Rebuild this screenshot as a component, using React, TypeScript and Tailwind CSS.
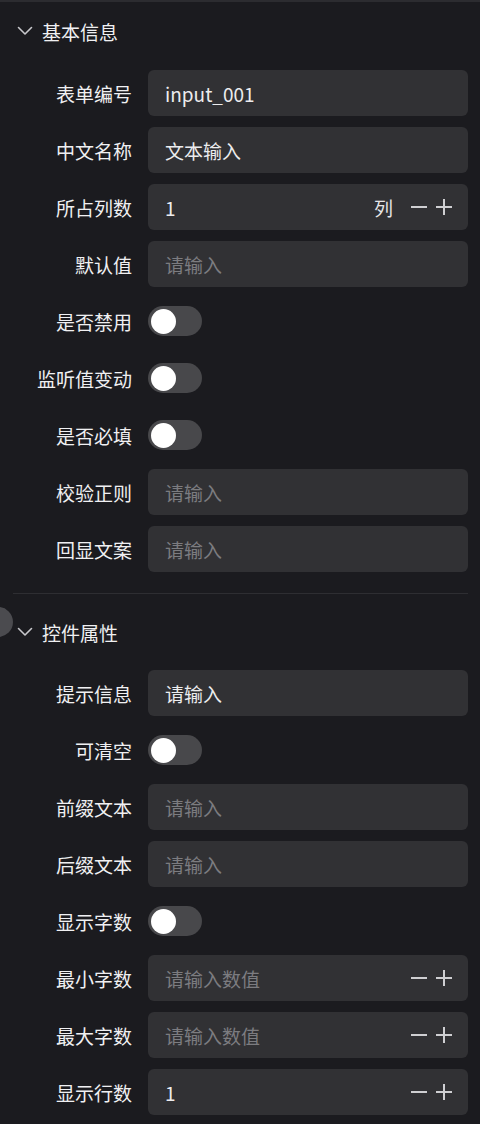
import React from "react";

const font = { fontFamily: '"Noto Sans CJK SC", "Noto Sans", sans-serif' };

function Chevron() {
  return (
    <svg width="16" height="10" viewBox="0 0 16 10" className="mr-[9px]">
      <path d="M1.5 1.5 L8 8 L14.5 1.5" fill="none" stroke="#c8c8cc" strokeWidth="1.6" strokeLinecap="round" strokeLinejoin="round" />
    </svg>
  );
}

function Stepper() {
  return (
    <div className="flex items-center gap-[7px]">
      <svg width="18" height="18" viewBox="0 0 18 18">
        <path d="M1 9 H17" stroke="#cfcfd2" strokeWidth="2" />
      </svg>
      <svg width="18" height="18" viewBox="0 0 18 18">
        <path d="M1 9 H17 M9 1 V17" stroke="#cfcfd2" strokeWidth="2" />
      </svg>
    </div>
  );
}

type Row =
  | { label: string; kind: "input"; value?: string; placeholder?: string }
  | { label: string; kind: "toggle" }
  | { label: string; kind: "number"; value?: string; placeholder?: string; unit?: string };

function Field({ row }: { row: Row }) {
  return (
    <div className="flex items-center h-[46px]">
      <div className="w-[132px] text-right text-[19px] text-[#f0f0f2] whitespace-nowrap leading-none">{row.label}</div>
      <div className="ml-[16px] w-[320px]">
        {row.kind === "toggle" ? (
          <div className="w-[54px] h-[30px] rounded-full bg-[#48484b] flex items-center px-[3px]">
            <div className="w-[25px] h-[25px] rounded-full bg-white" />
          </div>
        ) : (
          <div className="h-[46px] rounded-[6px] bg-[#313134] flex items-center pl-[17px] pr-[15px]">
            <span
              className={
                "flex-1 text-[19px] leading-none " + (row.value ? "text-[#ececee]" : "text-[#7c7c80]")
              }
            >
              {row.value ?? row.placeholder}
            </span>
            {row.kind === "number" && (
              <>
                {row.unit && <span className="text-[19px] text-[#e6e6e8] leading-none mr-[17px]">{row.unit}</span>}
                <Stepper />
              </>
            )}
          </div>
        )}
      </div>
    </div>
  );
}

const section1: Row[] = [
  { label: "表单编号", kind: "input", value: "input_001" },
  { label: "中文名称", kind: "input", value: "文本输入" },
  { label: "所占列数", kind: "number", value: "1", unit: "列" },
  { label: "默认值", kind: "input", placeholder: "请输入" },
  { label: "是否禁用", kind: "toggle" },
  { label: "监听值变动", kind: "toggle" },
  { label: "是否必填", kind: "toggle" },
  { label: "校验正则", kind: "input", placeholder: "请输入" },
  { label: "回显文案", kind: "input", placeholder: "请输入" },
];

const section2: Row[] = [
  { label: "提示信息", kind: "input", value: "请输入" },
  { label: "可清空", kind: "toggle" },
  { label: "前缀文本", kind: "input", placeholder: "请输入" },
  { label: "后缀文本", kind: "input", placeholder: "请输入" },
  { label: "显示字数", kind: "toggle" },
  { label: "最小字数", kind: "number", placeholder: "请输入数值" },
  { label: "最大字数", kind: "number", placeholder: "请输入数值" },
  { label: "显示行数", kind: "number", value: "1" },
];

function Header({ title }: { title: string }) {
  return (
    <div className="h-[46px] flex items-center pl-[17px]">
      <Chevron />
      <span className="text-[19px] text-[#f0f0f2] leading-none">{title}</span>
    </div>
  );
}

export default function App() {
  return (
    <div style={font} className="w-[480px] h-[1124px] bg-[#1b1b1f] border-t-2 border-[#2c2c30] overflow-hidden relative">
      <div className="pt-[6px]">
        <Header title="基本信息" />
        <div className="mt-[16px] flex flex-col gap-[11px]">
          {section1.map((r) => (
            <Field key={r.label} row={r} />
          ))}
        </div>
        <div className="mt-[21px] ml-[13px] mr-[12px] h-px bg-[#2e2e32]" />
        <div className="pt-[15px] relative">
          <div className="absolute left-[-17px] top-[13px] w-[30px] h-[30px] rounded-full bg-[#4b4b4f] flex items-center justify-end pr-[14px]">
            <div className="w-[3px] h-[3px] rounded-full bg-[#d0d0d0]" />
          </div>
          <Header title="控件属性" />
          <div className="mt-[15px] flex flex-col gap-[11px]">
            {section2.map((r) => (
              <Field key={r.label} row={r} />
            ))}
          </div>
        </div>
      </div>
    </div>
  );
}
